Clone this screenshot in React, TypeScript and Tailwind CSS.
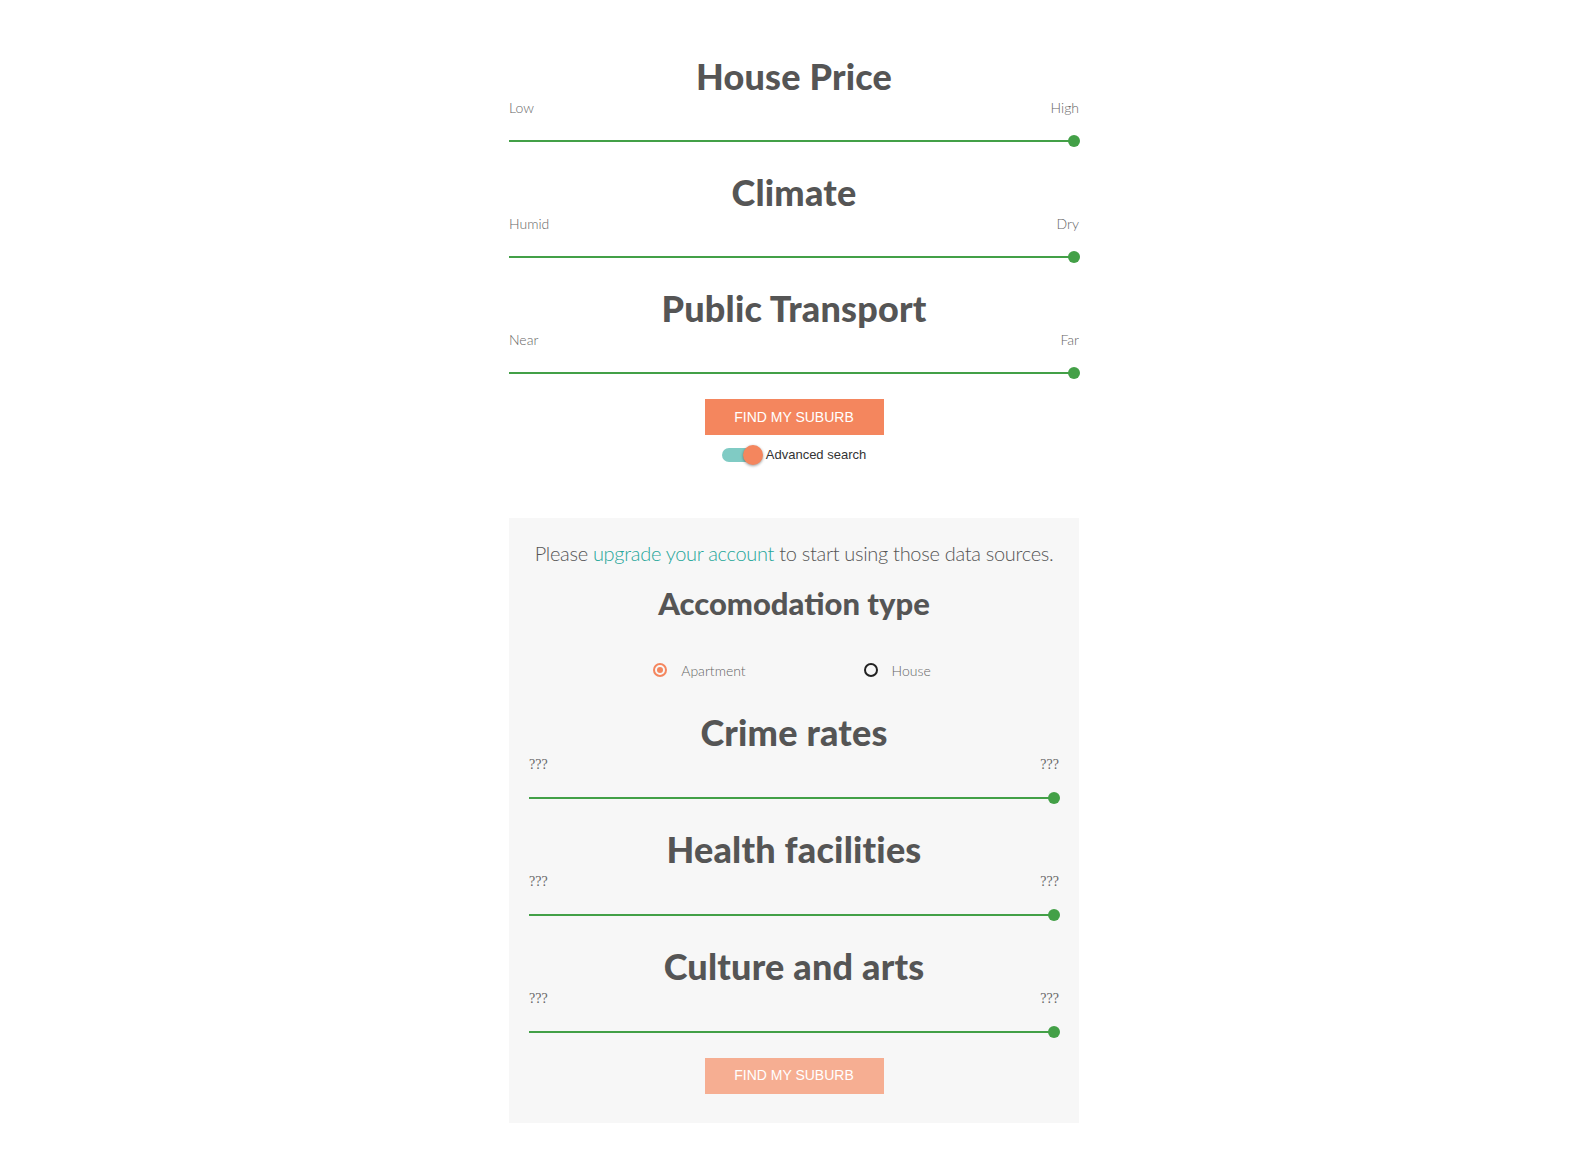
const font = "font-['Lato','Open_Sans',sans-serif]";

function SliderBlock({
  title,
  left,
  right,
  inPanel = false,
}: {
  title: string;
  left: string;
  right: string;
  inPanel?: boolean;
}) {
  return (
    <div className="flex flex-col">
      <h2 className="h-10 text-center text-[36px] font-black leading-10 tracking-[0.2px] text-[#555]">{title}</h2>
      <div
        className={`flex h-[22px] items-center justify-between text-[14px] font-light text-[#666] ${
          inPanel ? "mt-[2px] font-['Liberation_Serif',serif] font-normal" : ""
        }`}
      >
        <span>{left}</span>
        <span>{right}</span>
      </div>
      <div className={`relative flex h-[22px] items-center pr-[5px] ${inPanel ? "mt-[11px]" : "mt-3"}`}>
        <div className="relative h-[2px] w-full bg-[#43a047]">
          <div className="absolute -right-[6px] -top-[5px] h-3 w-3 rounded-full bg-[#43a047]" />
        </div>
      </div>
    </div>
  );
}

function FindButton({ faded = false }: { faded?: boolean }) {
  return (
    <button
      className={`h-9 w-[179px] font-['Liberation_Sans',Arial,sans-serif] text-[14px] text-white ${
        faded ? "bg-[#f6ae92]" : "bg-[#f4865e]"
      }`}
    >
      FIND MY SUBURB
    </button>
  );
}

export default function App() {
  return (
    <div className={`min-h-[1149px] bg-white ${font}`}>
      <div className="mx-auto w-[570px] pt-[56px]">
        <div className="flex flex-col gap-5">
          <SliderBlock title="House Price" left="Low" right="High" />
          <SliderBlock title="Climate" left="Humid" right="Dry" />
          <SliderBlock title="Public Transport" left="Near" right="Far" />
        </div>

        <div className="mt-[15px] flex justify-center">
          <FindButton />
        </div>

        <div className="mt-[10px] flex items-center justify-center gap-[3px]">
          <div className="relative h-[14px] w-[33px] rounded-full bg-[#80cbc4]">
            <div className="absolute -top-[3px] right-[-8px] h-5 w-5 rounded-full bg-[#f4865e] shadow-[0_1px_3px_rgba(0,0,0,0.4)]" />
          </div>
          <span className="ml-[8px] font-['Liberation_Sans',Arial,sans-serif] text-[13px] text-[#333]">
            Advanced search
          </span>
        </div>

        <div className="mt-[53px] bg-[#f7f7f7] px-5 pb-[29px] pt-[22px]">
          <p className="whitespace-nowrap text-center text-[20px] font-light leading-[26px] tracking-[-0.3px] text-[#555]">
            Please <span className="text-[#26a69a]">upgrade your account</span> to start using those data
            sources.
          </p>
          <h2 className="mt-[18px] text-center text-[31px] font-black leading-[38px] text-[#555]">
            Accomodation type
          </h2>
          <div className="mt-[38px] flex items-center justify-center gap-[118px] pr-[4px] text-[14px] font-light text-[#666]">
            <label className="flex items-center gap-[14px]">
              <span className="flex h-[14px] w-[14px] items-center justify-center rounded-full border-2 border-[#f4865e]">
                <span className="h-[6px] w-[6px] rounded-full bg-[#f4865e]" />
              </span>
              Apartment
            </label>
            <label className="flex items-center gap-[14px]">
              <span className="h-[14px] w-[14px] rounded-full border-2 border-[#222]" />
              House
            </label>
          </div>
          <div className="mt-[31px] flex flex-col gap-[20px]">
            <SliderBlock title="Crime rates" left="???" right="???" inPanel />
            <SliderBlock title="Health facilities" left="???" right="???" inPanel />
            <SliderBlock title="Culture and arts" left="???" right="???" inPanel />
          </div>
          <div className="mt-[15px] flex justify-center">
            <FindButton faded />
          </div>
        </div>
      </div>
    </div>
  );
}
